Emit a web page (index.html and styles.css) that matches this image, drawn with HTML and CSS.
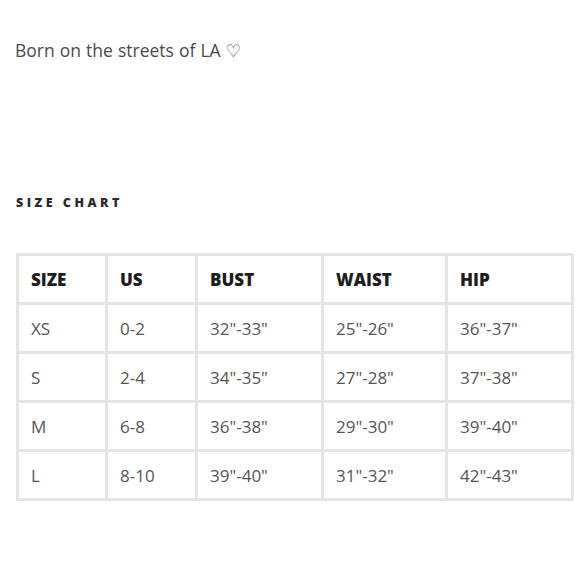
FILE: index.html
```html
<!DOCTYPE html>
<html>
<head>
<meta charset="utf-8">
<link rel="stylesheet" href="styles.css">
</head>
<body>
<p class="tagline">Born on the streets of LA ♡</p>
<h2 class="title">SIZE CHART</h2>
<table class="chart">
  <colgroup>
    <col class="c1"><col class="c2"><col class="c3"><col class="c4"><col class="c5">
  </colgroup>
  <tr class="head"><th>SIZE</th><th>US</th><th>BUST</th><th>WAIST</th><th>HIP</th></tr>
  <tr><td>XS</td><td>0-2</td><td>32"-33"</td><td>25"-26"</td><td>36"-37"</td></tr>
  <tr><td>S</td><td>2-4</td><td>34"-35"</td><td>27"-28"</td><td>37"-38"</td></tr>
  <tr><td>M</td><td>6-8</td><td>36"-38"</td><td>29"-30"</td><td>39"-40"</td></tr>
  <tr><td>L</td><td>8-10</td><td>39"-40"</td><td>31"-32"</td><td>42"-43"</td></tr>
</table>
</body>
</html>
```

FILE: styles.css
```css
html, body {
  margin: 0;
  padding: 0;
  background: #ffffff;
}
body {
  font-family: "Open Sans", "DejaVu Sans", sans-serif;
  color: #444;
}
.tagline {
  margin: 0;
  padding: 38px 0 0 15px;
  font-size: 17.5px;
  line-height: 24px;
  color: #4a4a4a;
  word-spacing: 0.5px;
}
.title {
  margin: 0;
  padding: 133px 0 0 16px;
  font-size: 12.5px;
  line-height: 16px;
  font-weight: 800;
  letter-spacing: 3.5px;
  color: #2a2a2a;
}
.chart {
  margin: 42px 0 0 16px;
  border-collapse: collapse;
  border: 3px solid #e4e4e4;
  table-layout: fixed;
  width: 555px;
}
.c1 { width: 89px; }
.c2 { width: 90px; }
.c3 { width: 126px; }
.c4 { width: 124px; }
.c5 { width: 126px; }
.chart th, .chart td {
  border: 3px solid #e4e4e4;
  height: 46px;
  padding: 0 0 0 12px;
  text-align: left;
  font-size: 17px;
  color: #555;
  font-weight: 400;
}
.chart th {
  font-weight: 800;
  color: #1e1e1e;
  font-size: 17px;
}
```
